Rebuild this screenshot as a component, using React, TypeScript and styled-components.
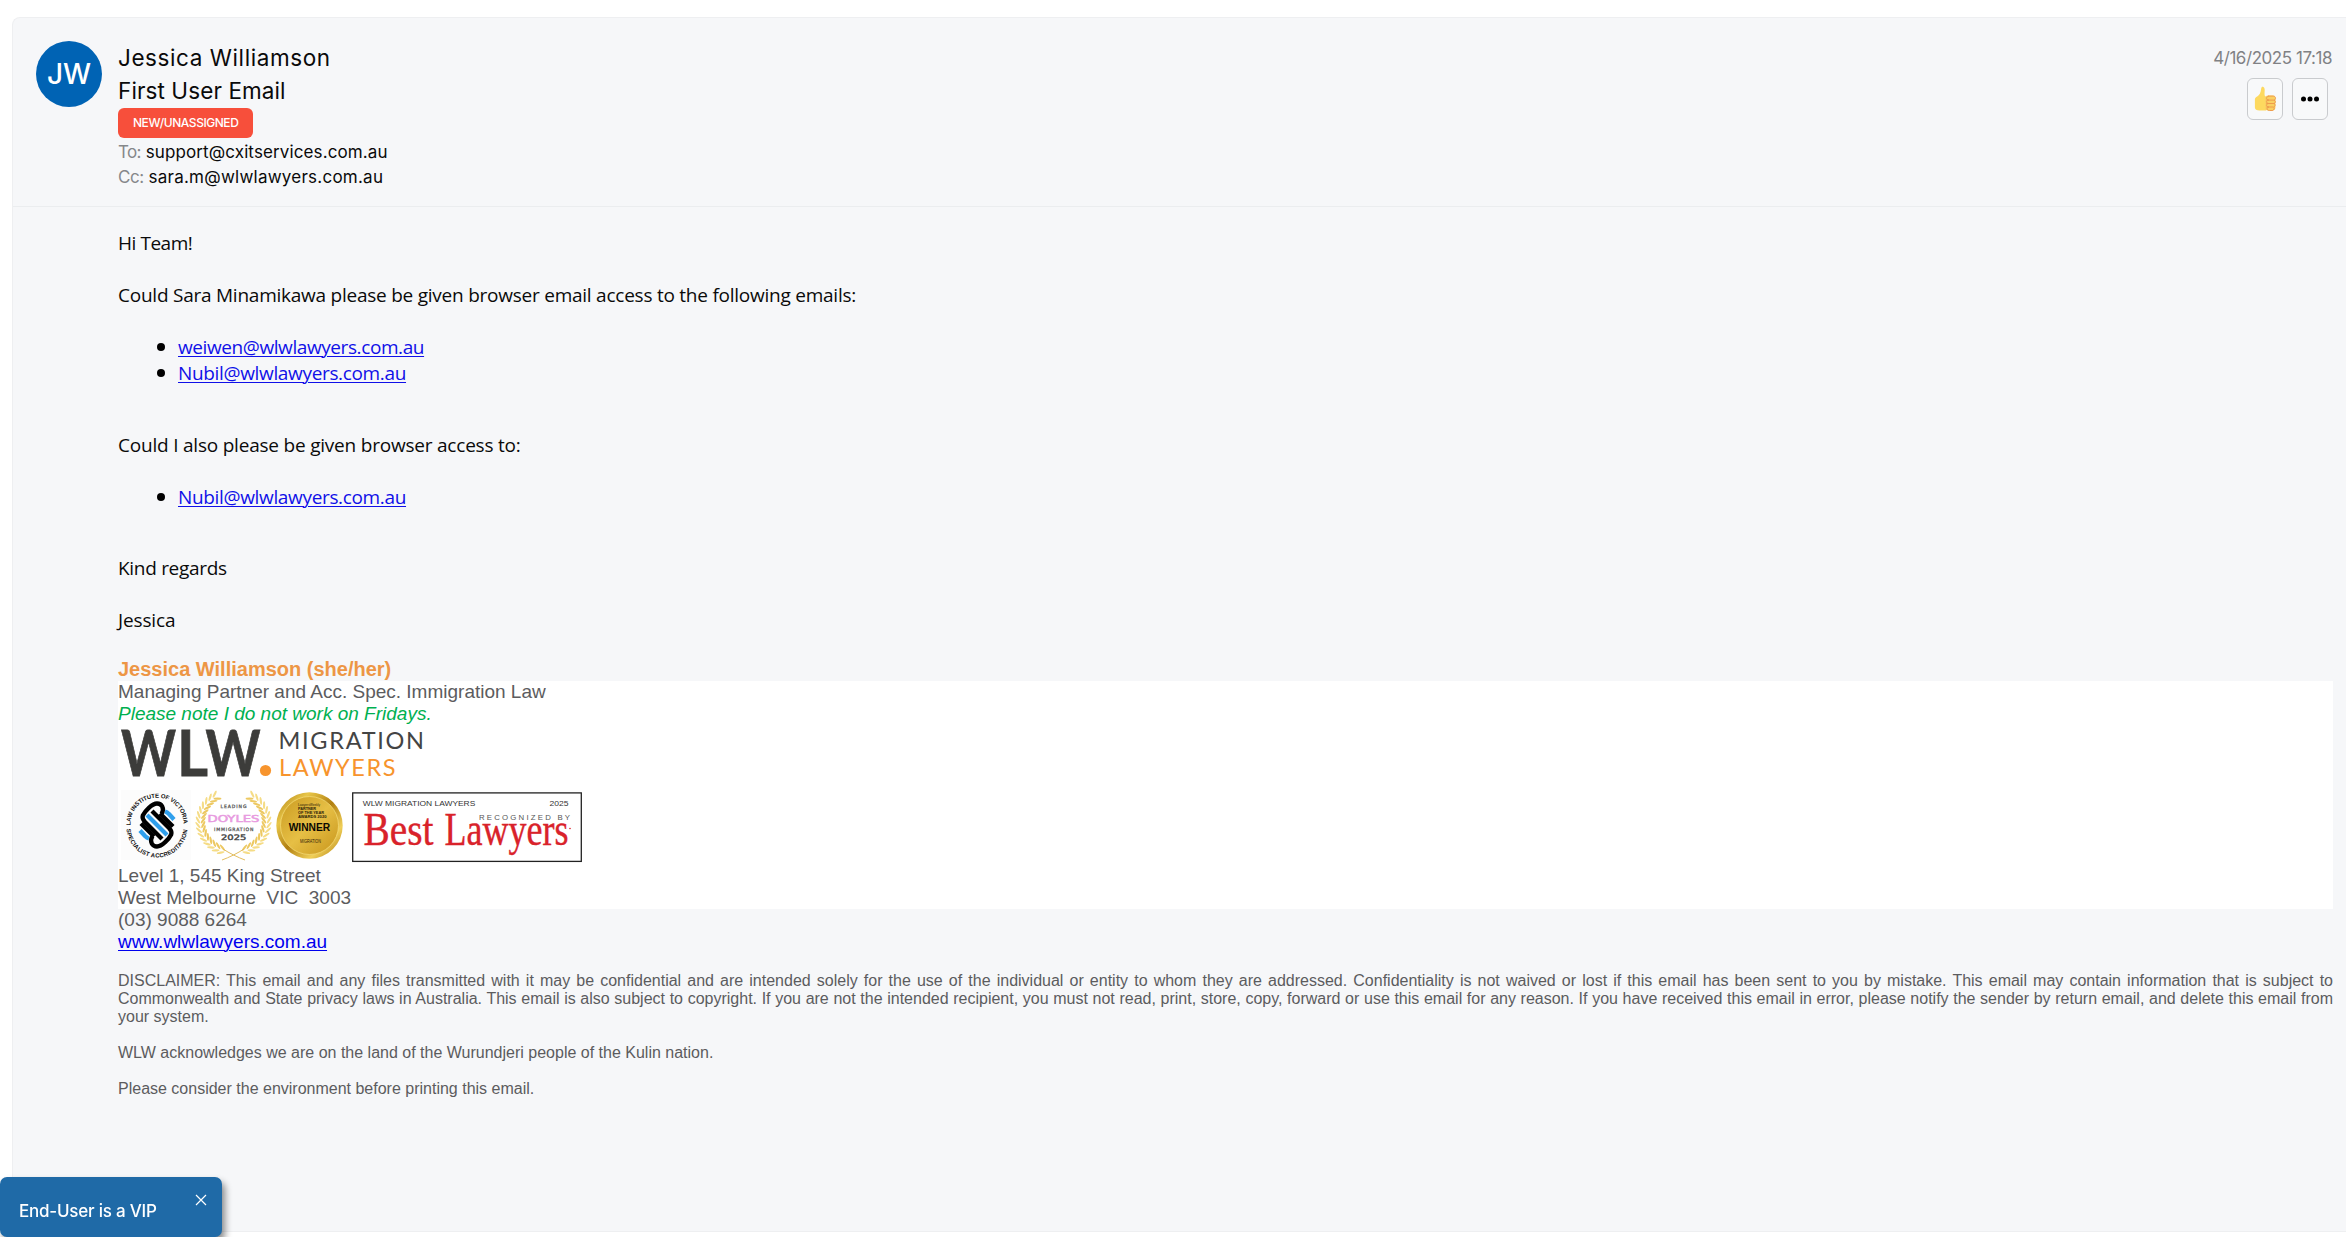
import React from "react";
import styled, { createGlobalStyle } from "styled-components";

const ui = `Inter, "Open Sans", sans-serif`;
const arial = `"Liberation Sans", Arial, sans-serif`;

const GlobalStyle = createGlobalStyle`
  html, body { margin: 0; padding: 0; background: #fff; height: 1237px; overflow: hidden; }
  * { box-sizing: border-box; }
`;

const Card = styled.article`
  margin: 17px 0 0 12px;
  height: 1215px;
  background: #f6f7f9;
  border: 1px solid #eeeff1;
  border-right: none;
  border-top-left-radius: 8px;
`;

const Header = styled.header`
  display: flex;
  align-items: flex-start;
  gap: 16px;
  height: 189px;
  padding: 23px 14px 0 23px;
  border-bottom: 1px solid #ebedef;
  font-family: ${ui};
`;

const Avatar = styled.div`
  flex: none;
  display: flex;
  align-items: center;
  justify-content: center;
  width: 66px;
  height: 66px;
  border-radius: 50%;
  background: #0063b4;
  color: #fff;
  font-size: 28px;
  font-weight: 500;
`;

const Summary = styled.div`
  flex: 1;
  display: flex;
  flex-direction: column;
  align-items: flex-start;
`;

const Title = styled.div<{ $spacing: number }>`
  font-size: 22.5px;
  line-height: 33px;
  letter-spacing: ${(p) => p.$spacing}px;
  color: #0a0a0a;
`;

const StatusBadge = styled.span`
  margin: 1px 0 2px;
  height: 30px;
  padding: 0 15px;
  border-radius: 6px;
  background: #f74f3b;
  color: #fff;
  font-size: 12px;
  font-weight: 500;
  line-height: 30px;
  letter-spacing: -0.46px;
`;

const Recipient = styled.div<{ $spacing: number }>`
  display: flex;
  gap: 5px;
  font-size: 17px;
  line-height: 25px;
  letter-spacing: ${(p) => p.$spacing}px;
  color: #0a0a0a;
`;

const RecipientLabel = styled.span<{ $spacing: number }>`
  color: #86888b;
  letter-spacing: ${(p) => p.$spacing}px;
`;

const Meta = styled.div`
  display: flex;
  flex-direction: column;
  align-items: flex-end;
  gap: 3px;
  padding-top: 1px;
`;

const Timestamp = styled.time`
  color: #808184;
  font-size: 17px;
  line-height: 33px;
  letter-spacing: -0.45px;
`;

const Actions = styled.div`
  display: flex;
  gap: 9px;
  margin-right: 4px;
`;

const ActionButton = styled.button`
  display: flex;
  align-items: center;
  justify-content: center;
  width: 36px;
  height: 42px;
  padding: 0;
  border: 1px solid #c9cbce;
  border-radius: 6px;
  background: #f8f9fa;
`;

const Body = styled.div`
  padding: 23px 13px 0 105px;
`;

const Message = styled.div`
  font-family: "Open Sans", "Noto Sans", sans-serif;
  font-size: 19px;
  line-height: 26px;
  letter-spacing: -0.24px;
  color: #0a0a0a;
`;

const Paragraph = styled.p<{ $spacing?: number }>`
  margin: 0 0 26px;
  letter-spacing: ${(p) => p.$spacing ?? -0.24}px;
`;

const LinkList = styled.ul<{ $gap: number }>`
  margin: 0 0 ${(p) => p.$gap}px;
  padding: 0 0 0 39px;
  list-style: none;
`;

const LinkItem = styled.li`
  display: flex;
  align-items: center;
  gap: 13px;
  &::before {
    content: "";
    width: 8px;
    height: 8px;
    border-radius: 50%;
    background: #000;
  }
`;

const MailLink = styled.a<{ $spacing: number }>`
  color: #1010e8;
  letter-spacing: ${(p) => p.$spacing}px;
  text-decoration: underline;
  text-decoration-thickness: 1px;
  text-underline-offset: 2px;
`;

const Signature = styled.div`
  font-family: ${arial};
  font-size: 19px;
  line-height: 22px;
  color: #5c5c5e;
`;

const SenderName = styled.div`
  margin-top: -1px;
  padding-bottom: 1px;
  font-size: 20px;
  font-weight: 700;
  color: #ed9645;
`;

const WhitePanel = styled.div`
  background: #fff;
`;

const Note = styled.div`
  font-style: italic;
  color: #00b050;
`;

const Line = styled.div`
  white-space: pre;
`;

const SiteLink = styled.a`
  color: #0000ee;
  text-decoration: underline;
  text-decoration-thickness: 1px;
  text-underline-offset: 2px;
`;

const Awards = styled.div`
  display: flex;
  height: 80px;
`;

const Drawing = styled.svg`
  display: block;
  flex: none;
  overflow: visible;
`;

const BestLawyersCard = styled(Drawing)`
  margin: 7px 0 0 7px;
`;

const Legal = styled.div`
  margin-top: 19px;
  font-family: ${arial};
  font-size: 16px;
  line-height: 18px;
  color: #5c5c5e;
  p { margin: 0 0 18px; }
  p:first-child { text-align: justify; }
`;

const Toast = styled.aside`
  position: fixed;
  left: 0;
  bottom: 0;
  display: flex;
  align-items: flex-start;
  justify-content: space-between;
  width: 222px;
  height: 60px;
  padding: 17px 15px 0 19px;
  border-radius: 7px;
  background: #1f6aa7;
  box-shadow: 3px 5px 7px rgba(0, 0, 0, 0.45);
  color: #fff;
  font-family: ${ui};
`;

const ToastText = styled.span`
  padding-top: 2px;
  font-size: 17px;
  font-weight: 500;
  line-height: 30px;
  letter-spacing: -0.22px;
`;

const ThumbIcon = () => (
  <Drawing width="22" height="26" viewBox="0 0 22 26">
    <path
      d="M7.2 2.4C7.4.9 8.3.5 9.3.9c1.2.5 1.5 2 1.4 3.6-.1 2-.3 3.9.1 5.2L12 11v13.500H5.500C2.600 24.500.900 23.300.900 21.500v-8c0-1.600.900-2.400 2.300-3.100C5.300 9.300 6.900 6.500 7.200 2.400Z"
      fill="#fdd95f"
    />
    <rect x="11" y="9.600" width="10.400" height="15" rx="3" fill="#fad063" />
    <path
      d="M12.300 14.100h8M12.300 17.500h8M12.300 21h7M14.800 10.200c-3 .3-3 3.700 0 3.900-3 0-3 3.400 0 3.400-3 0-3 3.300 0 3.500-2.400.2-2.300 3.500.5 3.500h3.500M14 10.100h5.500c2.600.1 2.600 3.700.5 4 1.900.3 1.900 3.100 0 3.400 1.700.3 1.500 3.300-.5 3.500 1.200.6 1 3-1 3.500"
      fill="none"
      stroke="#ef9c4c"
      strokeWidth="1"
    />
  </Drawing>
);

const DotsIcon = () => (
  <Drawing width="20" height="6" viewBox="0 0 20 6">
    {[3.5, 10, 16.5].map((x) => (
      <circle key={x} cx={x} cy="3" r="2.500" fill="#000" />
    ))}
  </Drawing>
);

const CompanyLogo = () => (
  <Drawing width="320" height="60" viewBox="118 725 320 60" fontFamily="Lato, sans-serif">
    <g fill="#3c3c3a" stroke="#3c3c3a" strokeWidth=".8" fontSize="63" fontWeight="700">
      <text x="121" y="775.600" textLength="55" lengthAdjust="spacingAndGlyphs">W</text>
      <text x="177" y="775.600" textLength="31" lengthAdjust="spacingAndGlyphs">L</text>
      <text x="205.500" y="775.600" textLength="55" lengthAdjust="spacingAndGlyphs">W</text>
    </g>
    <circle cx="265.500" cy="770.500" r="5.600" fill="#f7942d" />
    <text x="278.500" y="749.300" fontSize="23.500" fill="#444" textLength="145.500">MIGRATION</text>
    <text x="279" y="775.800" fontSize="23.500" fill="#f7942d" textLength="116.500">LAWYERS</text>
  </Drawing>
);

const InstituteSeal = () => (
  <Drawing width="75" height="80" viewBox="0 0 75 80" fontFamily={arial} fontWeight="700">
    <rect x="3" y="5" width="70" height="70" fill="#fcfcfc" />
    <defs>
      <path id="seal-top" d="M12.600 41.500A26.500 26.500 0 1 1 65.400 41.500" />
      <path id="seal-bottom" d="M8.500 42A30.500 30.500 0 0 0 69.500 42" />
    </defs>
    <g fontSize="6" fill="#111">
      <text textLength="84"><textPath href="#seal-top" startOffset="1" textLength="84">LAW INSTITUTE OF VICTORIA</textPath></text>
      <text textLength="91"><textPath href="#seal-bottom" startOffset="2" textLength="91">SPECIALIST ACCREDITATION</textPath></text>
    </g>
    <g fill="none">
      <g stroke="#2f9fec" strokeWidth="4.300">
        <path d="M29 30 49 50" />
        <path d="M47 26.500c2 .5 3 1.500 4 2.500L56 34.500" />
        <path d="M31 53.500c-2-.5-3-1.500-4-2.500L22 45.500" />
      </g>
      <g stroke="#000" strokeWidth="4.300">
        <path d="M43.500 29C47 23 43.500 18.500 39 18.500 34 18.500 27 26 24.800 30.500 24 33 25 35 27 37L44 54" />
        <path d="M34.500 51C31 57 34.500 61.500 39 61.500 44 61.500 51 54 53.200 49.500 54 47 53 45 51 43L34 26" />
        <path d="M42 28.500 55 41.500M23 38.500 36 51.500" />
      </g>
    </g>
  </Drawing>
);

const leaves = Array.from({ length: 15 }, (_, i) => {
  const angle = ((100 + (i * 128) / 14) * Math.PI) / 180;
  return {
    x: 40 + 32.5 * Math.cos(angle + 0.2),
    y: 37 + 30 * Math.sin(angle + 0.2),
    turn: (angle * 180) / Math.PI + 100,
  };
});

const Branch = () => (
  <>
    {leaves.map((leaf, i) => (
      <g key={i} transform={`translate(${leaf.x} ${leaf.y}) rotate(${leaf.turn})`}>
        <ellipse cx="1" cy="-2.500" rx="3.900" ry="1.100" transform="rotate(-32)" fill="#f5dc86" />
        <ellipse cx="1" cy="2.500" rx="3.900" ry="1.100" transform="rotate(32)" fill="#edc962" />
      </g>
    ))}
    <path d="M52 75C45 72.500 36 68 30 64" fill="none" stroke="#e3be60" strokeWidth="1" />
  </>
);

const DoylesBadge = () => (
  <Drawing width="82" height="80" viewBox="0 0 82 80" fontFamily={`"DejaVu Sans", sans-serif`}>
    <Branch />
    <g transform="translate(81 0) scale(-1 1)">
      <Branch />
    </g>
    <text x="27.500" y="22.800" fontSize="4.600" textLength="26" fill="#555" stroke="#555" strokeWidth=".25">LEADING</text>
    <text x="14.500" y="37.300" fontSize="9" textLength="52" lengthAdjust="spacingAndGlyphs" fill="#e89be0" stroke="#e89be0" strokeWidth=".5">DOYLES</text>
    <text x="21" y="46.300" fontSize="4.600" textLength="39.500" fill="#555" stroke="#555" strokeWidth=".25">IMMIGRATION</text>
    <text x="28" y="54.800" fontSize="7.500" textLength="25.500" lengthAdjust="spacingAndGlyphs" fill="#444" stroke="#444" strokeWidth=".4">2025</text>
  </Drawing>
);

const WinnerMedal = () => (
  <Drawing width="70" height="80" viewBox="0 0 70 80" fontFamily={arial} fill="#2b2108">
    <defs>
      <linearGradient id="medal-rim" x1="0" y1="0" x2="1" y2="1">
        <stop offset="0" stopColor="#a9780c" />
        <stop offset=".25" stopColor="#e8c649" />
        <stop offset=".5" stopColor="#b17f10" />
        <stop offset=".75" stopColor="#f0cf58" />
        <stop offset="1" stopColor="#a87408" />
      </linearGradient>
      <linearGradient id="medal-face" x1="0" y1="0" x2="1" y2="1">
        <stop offset="0" stopColor="#c99a20" />
        <stop offset=".5" stopColor="#e6bf45" />
        <stop offset="1" stopColor="#c8951b" />
      </linearGradient>
    </defs>
    <circle cx="34.500" cy="40.500" r="33.200" fill="url(#medal-rim)" />
    <circle cx="34.500" cy="40.500" r="29" fill="url(#medal-face)" stroke="#f2d873" strokeWidth=".8" />
    <g fontSize="4.200" fontWeight="700">
      <text x="23" y="20.600" fontSize="3.800" fontWeight="400" textLength="22" lengthAdjust="spacingAndGlyphs">LawyersWeekly</text>
      <text x="23" y="24.700" textLength="18" lengthAdjust="spacingAndGlyphs">PARTNER</text>
      <text x="23" y="28.600" textLength="26" lengthAdjust="spacingAndGlyphs">OF THE YEAR</text>
      <text x="23" y="32.500" textLength="28.500" lengthAdjust="spacingAndGlyphs">AWARDS 2020</text>
    </g>
    <text x="13.700" y="46.200" fontSize="10.500" fontWeight="700" textLength="41.500" lengthAdjust="spacingAndGlyphs" fill="#0b0902">WINNER</text>
    <text x="25" y="57.500" fontSize="4.600" textLength="21" lengthAdjust="spacingAndGlyphs">MIGRATION</text>
  </Drawing>
);

const BestLawyers = () => (
  <BestLawyersCard width="230" height="70" viewBox="352 792 230 70">
    <rect x="352.700" y="792.900" width="228.600" height="68.500" fill="#fff" stroke="#222" strokeWidth="1.300" />
    <g fontFamily={arial} fill="#333">
      <text x="362.800" y="806" fontSize="8" textLength="112.500" lengthAdjust="spacingAndGlyphs">WLW MIGRATION LAWYERS</text>
      <text x="549.500" y="806" fontSize="8" textLength="19" lengthAdjust="spacingAndGlyphs">2025</text>
      <text x="479" y="819.600" fontSize="7.800" textLength="91" fill="#555">RECOGNIZED BY</text>
    </g>
    <g fontFamily={`"Liberation Serif", serif`} fontSize="45.500" fill="#d9222a" stroke="#d9222a" strokeWidth=".4">
      <text x="363.500" y="845" textLength="70" lengthAdjust="spacingAndGlyphs">Best</text>
      <text x="444.500" y="845" textLength="124" lengthAdjust="spacingAndGlyphs">Lawyers</text>
    </g>
    <circle cx="570" cy="828.500" r=".8" fill="#d9222a" />
  </BestLawyersCard>
);

const CloseIcon = () => (
  <Drawing width="12" height="12" viewBox="0 0 12 12">
    <path d="M1 1 11 11M11 1 1 11" stroke="#fff" strokeWidth="1.200" />
  </Drawing>
);

export default function App() {
  return (
    <>
      <GlobalStyle />
      <Card>
        <Header>
          <Avatar>JW</Avatar>
          <Summary>
            <Title $spacing={0.58}>Jessica Williamson</Title>
            <Title $spacing={0.1}>First User Email</Title>
            <StatusBadge>NEW/UNASSIGNED</StatusBadge>
            <Recipient $spacing={0.12}>
              <RecipientLabel $spacing={-0.7}>To:</RecipientLabel>
              support@cxitservices.com.au
            </Recipient>
            <Recipient $spacing={0.24}>
              <RecipientLabel $spacing={-0.5}>Cc:</RecipientLabel>
              sara.m@wlwlawyers.com.au
            </Recipient>
          </Summary>
          <Meta>
            <Timestamp>4/16/2025 17:18</Timestamp>
            <Actions>
              <ActionButton aria-label="Like"><ThumbIcon /></ActionButton>
              <ActionButton aria-label="More"><DotsIcon /></ActionButton>
            </Actions>
          </Meta>
        </Header>
        <Body>
          <Message>
            <Paragraph $spacing={-0.45}>Hi Team!</Paragraph>
            <Paragraph>Could Sara Minamikawa please be given browser email access to the following emails:</Paragraph>
            <LinkList $gap={46}>
              <LinkItem><MailLink $spacing={-0.41}>weiwen@wlwlawyers.com.au</MailLink></LinkItem>
              <LinkItem><MailLink $spacing={-0.34}>Nubil@wlwlawyers.com.au</MailLink></LinkItem>
            </LinkList>
            <Paragraph $spacing={-0.21}>Could I also please be given browser access to:</Paragraph>
            <LinkList $gap={45}>
              <LinkItem><MailLink $spacing={-0.34}>Nubil@wlwlawyers.com.au</MailLink></LinkItem>
            </LinkList>
            <Paragraph $spacing={-0.3}>Kind regards</Paragraph>
            <Paragraph $spacing={-0.15}>Jessica</Paragraph>
          </Message>
          <Signature>
            <SenderName>Jessica Williamson (she/her)</SenderName>
            <WhitePanel>
              <Line>Managing Partner and Acc. Spec. Immigration Law</Line>
              <Note>Please note I do not work on Fridays.</Note>
              <CompanyLogo />
              <Awards>
                <InstituteSeal />
                <DoylesBadge />
                <WinnerMedal />
                <BestLawyers />
              </Awards>
              <Line>Level 1, 545 King Street</Line>
              <Line>{"West Melbourne  VIC  3003"}</Line>
            </WhitePanel>
            <Line>(03) 9088 6264</Line>
            <Line><SiteLink>www.wlwlawyers.com.au</SiteLink></Line>
          </Signature>
          <Legal>
            <p>
              DISCLAIMER: This email and any files transmitted with it may be confidential and are intended solely for
              the use of the individual or entity to whom they are addressed. Confidentiality is not waived or lost if
              this email has been sent to you by mistake. This email may contain information that is subject to
              Commonwealth and State privacy laws in Australia. This email is also subject to copyright. If you are not
              the intended recipient, you must not read, print, store, copy, forward or use this email for any reason.
              If you have received this email in error, please notify the sender by return email, and delete this email
              from your system.
            </p>
            <p>WLW acknowledges we are on the land of the Wurundjeri people of the Kulin nation.</p>
            <p>Please consider the environment before printing this email.</p>
          </Legal>
        </Body>
      </Card>
      <Toast>
        <ToastText>End-User is a VIP</ToastText>
        <CloseIcon />
      </Toast>
    </>
  );
}
